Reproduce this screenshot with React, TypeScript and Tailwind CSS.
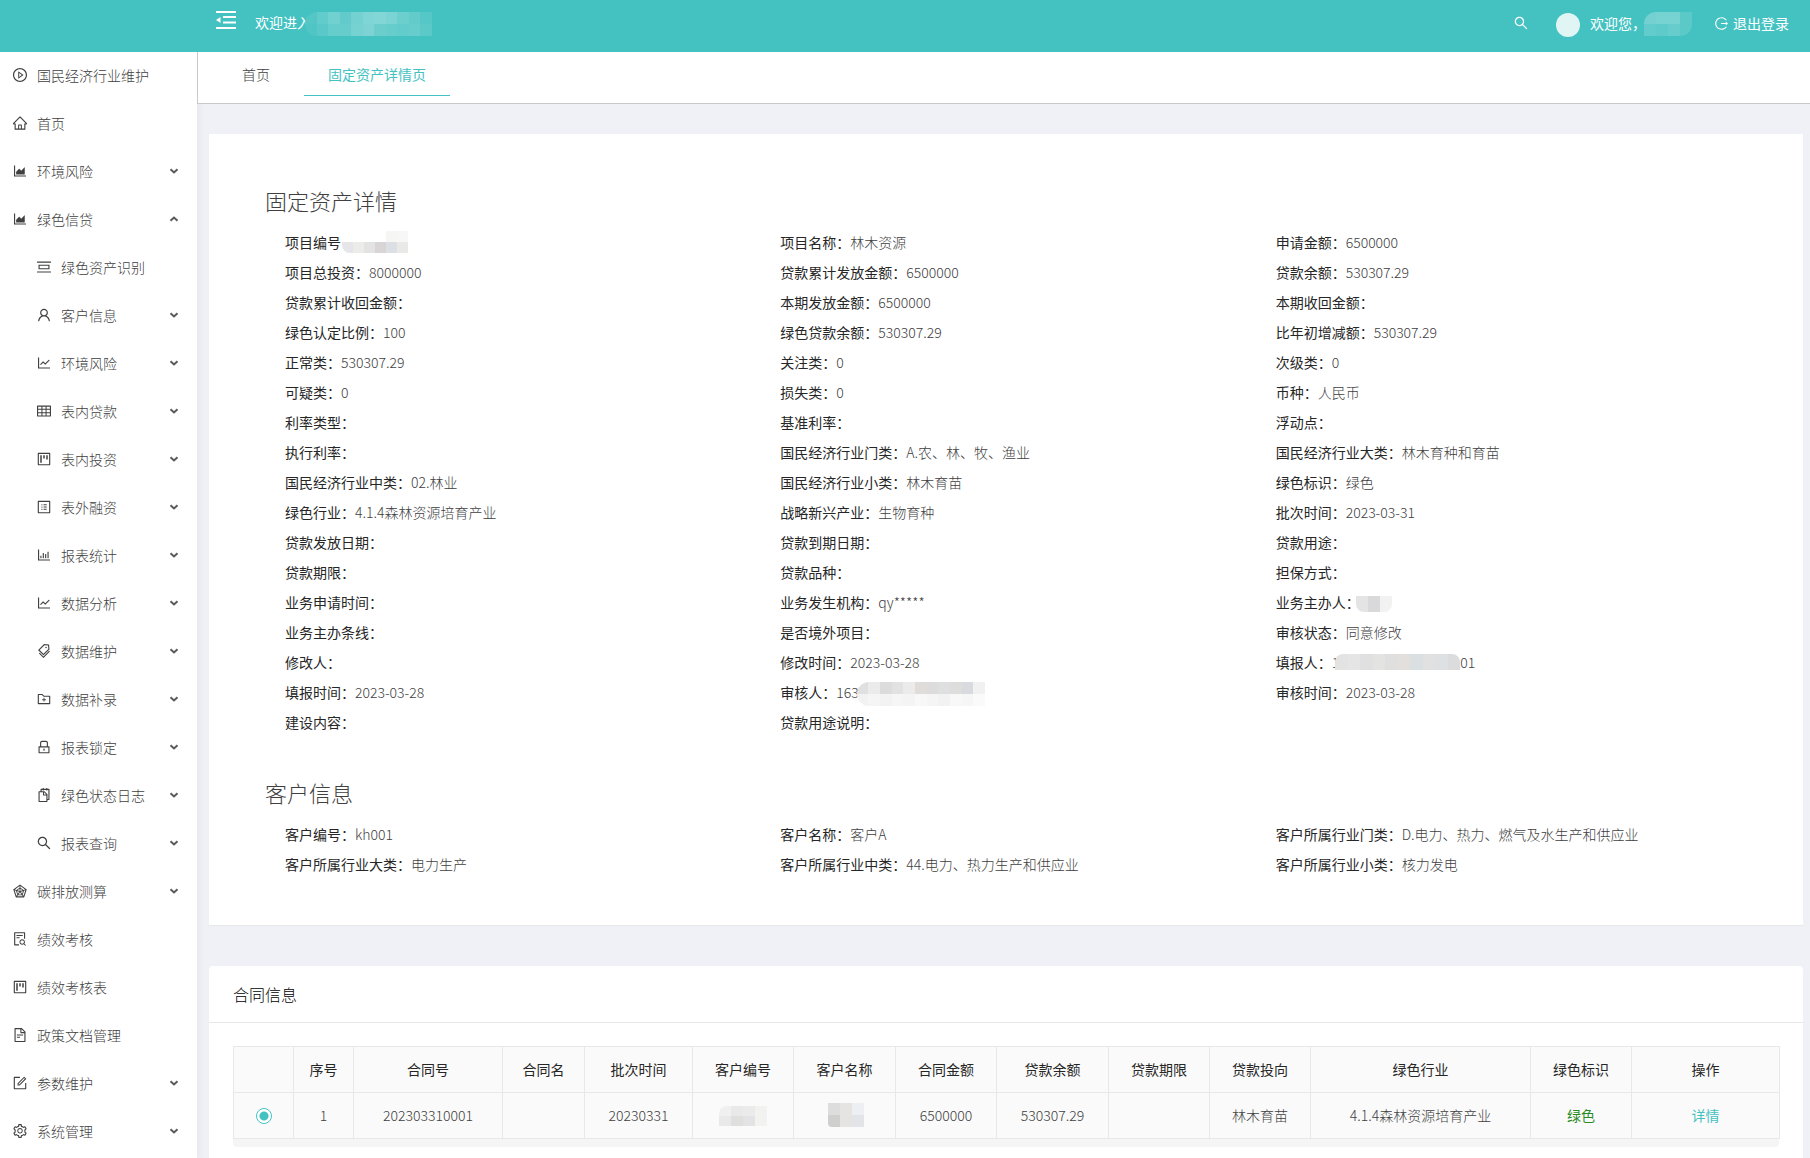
import type { ReactNode } from "react";
import type { IconType } from "react-icons";
import {
  AiOutlineAreaChart,
  AiOutlineBarChart,
  AiOutlineFileSearch,
  AiOutlineFileText,
  AiOutlineFolderAdd,
  AiOutlineForm,
  AiOutlineHome,
  AiOutlineLineChart,
  AiOutlineLock,
  AiOutlineLogout,
  AiOutlinePicCenter,
  AiOutlinePlayCircle,
  AiOutlineProfile,
  AiOutlineProject,
  AiOutlineRadarChart,
  AiOutlineSearch,
  AiOutlineSetting,
  AiOutlineSnippets,
  AiOutlineTable,
  AiOutlineTags,
  AiOutlineUser,
} from "react-icons/ai";

type MenuItem = { label: string; icon: IconType; sub?: boolean; arrow?: "down" | "up" };

const menu: MenuItem[] = [
  { label: "国民经济行业维护", icon: AiOutlinePlayCircle },
  { label: "首页", icon: AiOutlineHome },
  { label: "环境风险", icon: AiOutlineAreaChart, arrow: "down" },
  { label: "绿色信贷", icon: AiOutlineAreaChart, arrow: "up" },
  { label: "绿色资产识别", icon: AiOutlinePicCenter, sub: true },
  { label: "客户信息", icon: AiOutlineUser, sub: true, arrow: "down" },
  { label: "环境风险", icon: AiOutlineLineChart, sub: true, arrow: "down" },
  { label: "表内贷款", icon: AiOutlineTable, sub: true, arrow: "down" },
  { label: "表内投资", icon: AiOutlineProject, sub: true, arrow: "down" },
  { label: "表外融资", icon: AiOutlineProfile, sub: true, arrow: "down" },
  { label: "报表统计", icon: AiOutlineBarChart, sub: true, arrow: "down" },
  { label: "数据分析", icon: AiOutlineLineChart, sub: true, arrow: "down" },
  { label: "数据维护", icon: AiOutlineTags, sub: true, arrow: "down" },
  { label: "数据补录", icon: AiOutlineFolderAdd, sub: true, arrow: "down" },
  { label: "报表锁定", icon: AiOutlineLock, sub: true, arrow: "down" },
  { label: "绿色状态日志", icon: AiOutlineSnippets, sub: true, arrow: "down" },
  { label: "报表查询", icon: AiOutlineSearch, sub: true, arrow: "down" },
  { label: "碳排放测算", icon: AiOutlineRadarChart, arrow: "down" },
  { label: "绩效考核", icon: AiOutlineFileSearch },
  { label: "绩效考核表", icon: AiOutlineProject },
  { label: "政策文档管理", icon: AiOutlineFileText },
  { label: "参数维护", icon: AiOutlineForm, arrow: "down" },
  { label: "系统管理", icon: AiOutlineSetting, arrow: "down" },
];

/* Pixelated strip covering private values; each inner array is one row of tiles. */
function Mosaic({ rows, className }: { rows: string[][]; className: string }) {
  return (
    <span aria-hidden="true" className={`inline-flex shrink-0 flex-col overflow-hidden ${className}`}>
      {rows.map((row, r) => (
        <span key={r} className="flex flex-1">
          {row.map((color, c) => (
            <span key={c} className="flex-1" style={{ backgroundColor: color }} />
          ))}
        </span>
      ))}
    </span>
  );
}

type Field = { label: string; value?: ReactNode; noColon?: boolean };

const assetFields: Field[] = [
  {
    label: "项目编号",
    noColon: true,
    value: (
      <Mosaic
        className="-my-1 ml-px h-[22px] w-[66px] rounded-l-lg align-middle"
        rows={[
          ["#ffffff", "#ffffff", "#ffffff", "#ffffff", "#f6f6f5", "#f7f7f7"],
          ["#e6e5e9", "#ececeb", "#e3e3e4", "#d9d4d6", "#dce0e4", "#e9e9e8"],
        ]}
      />
    ),
  },
  { label: "项目名称", value: "林木资源" },
  { label: "申请金额", value: "6500000" },
  { label: "项目总投资", value: "8000000" },
  { label: "贷款累计发放金额", value: "6500000" },
  { label: "贷款余额", value: "530307.29" },
  { label: "贷款累计收回金额" },
  { label: "本期发放金额", value: "6500000" },
  { label: "本期收回金额" },
  { label: "绿色认定比例", value: "100" },
  { label: "绿色贷款余额", value: "530307.29" },
  { label: "比年初增减额", value: "530307.29" },
  { label: "正常类", value: "530307.29" },
  { label: "关注类", value: "0" },
  { label: "次级类", value: "0" },
  { label: "可疑类", value: "0" },
  { label: "损失类", value: "0" },
  { label: "币种", value: "人民币" },
  { label: "利率类型" },
  { label: "基准利率" },
  { label: "浮动点" },
  { label: "执行利率" },
  { label: "国民经济行业门类", value: "A.农、林、牧、渔业" },
  { label: "国民经济行业大类", value: "林木育种和育苗" },
  { label: "国民经济行业中类", value: "02.林业" },
  { label: "国民经济行业小类", value: "林木育苗" },
  { label: "绿色标识", value: "绿色" },
  { label: "绿色行业", value: "4.1.4森林资源培育产业" },
  { label: "战略新兴产业", value: "生物育种" },
  { label: "批次时间", value: "2023-03-31" },
  { label: "贷款发放日期" },
  { label: "贷款到期日期" },
  { label: "贷款用途" },
  { label: "贷款期限" },
  { label: "贷款品种" },
  { label: "担保方式" },
  { label: "业务申请时间" },
  { label: "业务发生机构", value: "qy*****" },
  {
    label: "业务主办人",
    value: (
      <Mosaic
        className="-ml-1 mt-1 h-4 w-9 rounded-b-lg align-middle"
        rows={[["#e4e4e5", "#d9d9dc", "#f2f2f3"]]}
      />
    ),
  },
  { label: "业务主办条线" },
  { label: "是否境外项目" },
  { label: "审核状态", value: "同意修改" },
  { label: "修改人" },
  { label: "修改时间", value: "2023-03-28" },
  {
    label: "填报人",
    value: (
      <>
        1
        <Mosaic
          className="-ml-1 h-4 w-[125px] rounded-t-lg align-middle"
          rows={[["#e3e3e3", "#e5e5e5", "#e0e0e0", "#e3e3e2", "#dfdfe0", "#e2dfdc", "#dadfe2", "#e0e1e0", "#dde1e3", "#dcdcdc"]]}
        />
        01
      </>
    ),
  },
  { label: "填报时间", value: "2023-03-28" },
  {
    label: "审核人",
    value: (
      <>
        163
        <Mosaic
          className="-ml-0.5 mt-1 h-6 w-32 rounded-l-xl align-middle"
          rows={[
            ["#e0e0e2", "#ebebeb", "#dcdcdd", "#e2e2e1", "#ebebeb", "#e0dcda", "#dcdcdd", "#dedfe0", "#dddddd", "#d9dadf", "#f1f1f1"],
            ["#f2f2f2", "#f5f5f5", "#f3f3f4", "#f6f6f6", "#f3f4f3", "#f8f8f8", "#f5f5f5", "#f2f2f2", "#f8f8f8", "#f6f6f6", "#fafafa"],
          ]}
        />
      </>
    ),
  },
  { label: "审核时间", value: "2023-03-28" },
  { label: "建设内容" },
  { label: "贷款用途说明" },
];

const customerFields: Field[] = [
  { label: "客户编号", value: "kh001" },
  { label: "客户名称", value: "客户A" },
  { label: "客户所属行业门类", value: "D.电力、热力、燃气及水生产和供应业" },
  { label: "客户所属行业大类", value: "电力生产" },
  { label: "客户所属行业中类", value: "44.电力、热力生产和供应业" },
  { label: "客户所属行业小类", value: "核力发电" },
];

function FieldList({ title, fields }: { title: string; fields: Field[] }) {
  return (
    <section>
      <h2 className="pl-14 text-[22px] leading-8">{title}</h2>
      <dl className="mt-[11px] grid grid-cols-3 pr-8 pl-[76px]">
        {fields.map((f) => (
          <div key={f.label} className="flex h-[30px] items-center whitespace-nowrap">
            <dt className="font-normal text-[#262626]">
              {f.label}
              {f.noColon ? "" : "："}
            </dt>
            <dd className="flex items-center">{f.value}</dd>
          </div>
        ))}
      </dl>
    </section>
  );
}

type Column = { title: string; width: number; cell: ReactNode };

const columns: Column[] = [
  {
    title: "",
    width: 60,
    cell: (
      <input
        type="radio"
        name="contract"
        aria-label="选择合同 202303310001"
        defaultChecked
        className="mx-auto mt-0.5 block size-4 appearance-none rounded-full border border-[#44c2c2] bg-white bg-[radial-gradient(circle,#44c2c2_0_4px,transparent_5px)]"
      />
    ),
  },
  { title: "序号", width: 60, cell: "1" },
  { title: "合同号", width: 149, cell: "202303310001" },
  { title: "合同名", width: 82, cell: "" },
  { title: "批次时间", width: 108, cell: "20230331" },
  {
    title: "客户编号",
    width: 101,
    cell: (
      <Mosaic
        className="h-5 w-12 rounded-tl-lg align-middle"
        rows={[
          ["#f0f0f0", "#e9e9e9", "#ebebeb", "#f2f2f0"],
          ["#e8e9e8", "#dfdfde", "#e3e3e5", "#f2f2f0"],
        ]}
      />
    ),
  },
  {
    title: "客户名称",
    width: 102,
    cell: (
      <Mosaic
        className="ml-0.5 h-6 w-9 rounded-bl-sm align-middle"
        rows={[
          ["#dddddd", "#e5e4e2", "#eeeff2"],
          ["#cfcfce", "#e5e4e2", "#e3e4e7"],
        ]}
      />
    ),
  },
  { title: "合同金额", width: 101, cell: "6500000" },
  { title: "贷款余额", width: 112, cell: "530307.29" },
  { title: "贷款期限", width: 101, cell: "" },
  { title: "贷款投向", width: 101, cell: "林木育苗" },
  { title: "绿色行业", width: 220, cell: "4.1.4森林资源培育产业" },
  { title: "绿色标识", width: 101, cell: <span className="font-normal text-[#2b8a1f]">绿色</span> },
  {
    title: "操作",
    width: 148,
    cell: (
      <a href="#detail" className="font-normal text-[#44c2c2]">
        详情
      </a>
    ),
  },
];

function Chevron({ up }: { up?: boolean }) {
  return (
    <svg
      viewBox="0 0 10 10"
      aria-hidden="true"
      className={`ml-auto size-2.5 fill-none stroke-[#595959] stroke-2 ${up ? "rotate-180" : ""}`}
    >
      <path d="M1.5 3.2 L5 6.4 L8.5 3.2" />
    </svg>
  );
}

function FoldIcon() {
  return (
    <svg viewBox="0 0 20 18" aria-hidden="true" className="h-[18px] w-5 fill-white">
      <path d="M0 0H20V2H0zM7 5H20V7H7zM7 10.5H20V12.5H7zM0 16H20V18H0zM0 9L4.5 6V12z" />
    </svg>
  );
}

function Header() {
  return (
    <header className="z-10 flex h-[52px] items-center bg-[#44c2c2] pr-[21px] pl-[216px] font-normal text-white">
      <button type="button" aria-label="收起菜单" className="mb-3">
        <FoldIcon />
      </button>
      <span className="mb-2 ml-[19px]">欢迎进入</span>
      <Mosaic
        className="-ml-1.5 mb-1 h-6 w-[127px] rounded-l-xl"
        rows={[
          ["#55c6c6", "#62cbcb", "#71d0d0", "#62caca", "#74d1d1", "#7fd5d5", "#83d6d6", "#7bd3d3", "#6dcece", "#64cbcb", "#55c7c7"],
          ["#50c5c5", "#5ac8c8", "#66cccc", "#66cccc", "#76d1d1", "#7dd3d3", "#6ccdcd", "#66cccc", "#62cbcb", "#66cccc", "#5cc9c9"],
        ]}
      />
      <div className="ml-auto flex items-center">
        <button type="button" aria-label="搜索" className="mb-1.5">
          <AiOutlineSearch className="size-4" />
        </button>
        <span className="mb-0.5 ml-[27px] size-6 rounded-full bg-[#e0f5f4]" />
        <span className="mb-1.5 ml-2.5">欢迎您，</span>
        <Mosaic
          className="-ml-0.5 mb-1 h-6 w-12 rounded-tl-xl rounded-br-xl"
          rows={[
            ["#75d1d1", "#77d2d2", "#77d2d2", "#5cc9c9"],
            ["#62cbcb", "#5ecaca", "#66cccc", "#5cc9c9"],
          ]}
        />
        <button type="button" className="mb-1.5 ml-[22px] flex items-center gap-1">
          <AiOutlineLogout className="size-[15px]" />
          退出登录
        </button>
      </div>
    </header>
  );
}

function Sidebar() {
  return (
    <nav className="w-[197px] shrink-0 bg-white shadow-[2px_0_8px_rgba(29,35,41,0.05)]">
      <ul>
        {menu.map(({ label, icon: Icon, sub, arrow }, i) => (
          <li key={i}>
            <button
              type="button"
              className={`flex h-12 w-full items-center pr-[18px] pb-0.5 ${sub ? "pl-9" : "pl-3"}`}
            >
              <Icon className="mr-[9px] size-4 shrink-0" />
              <span className="whitespace-nowrap">{label}</span>
              {arrow && <Chevron up={arrow === "up"} />}
            </button>
          </li>
        ))}
      </ul>
    </nav>
  );
}

export default function App() {
  return (
    <div className="flex min-h-screen flex-col overflow-hidden bg-[#f0f1f6] font-['Noto_Sans_CJK_SC',sans-serif] text-sm font-light text-[#404040]">
      <Header />
      <div className="flex grow">
        <Sidebar />
        <main className="flex min-w-0 grow flex-col">
          <div className="flex h-[52px] items-start gap-2.5 border-b border-l border-[#c9c9c9] bg-white pl-5">
            <button type="button" className="h-11 px-6">
              首页
            </button>
            <button type="button" className="h-11 border-b border-[#44c2c2] px-6 font-normal text-[#44c2c2]">
              固定资产详情页
            </button>
          </div>
          <div className="mt-[30px] mr-[7px] ml-3 flex flex-col gap-[39px] border-b border-[#e8e8e8] bg-white pt-[50px] pb-[46px]">
            <FieldList title="固定资产详情" fields={assetFields} />
            <FieldList title="客户信息" fields={customerFields} />
          </div>
          <div className="mt-10 mr-[7px] ml-3 flex grow flex-col rounded-t-sm bg-white">
            <h2 className="border-b border-[#e8e8e8] px-6 py-4 text-base text-black">合同信息</h2>
            <div className="px-6 pt-[23px] pb-2">
              <div className="rounded-b-sm bg-[#f5f5f5] pb-2">
                <table className="w-full table-fixed border-collapse bg-[#fafafa] text-center">
                  <colgroup>
                    {columns.map((c, i) => (
                      <col key={i} style={{ width: c.width }} />
                    ))}
                  </colgroup>
                  <thead>
                    <tr className="h-[46px] text-[#262626]">
                      {columns.map((c, i) => (
                        <th key={i} scope="col" className="border border-[#e8e8e8] p-0 pb-0.5 font-normal">
                          {c.title}
                        </th>
                      ))}
                    </tr>
                  </thead>
                  <tbody>
                    <tr className="h-[46px]">
                      {columns.map((c, i) => (
                        <td key={i} className="border border-[#e8e8e8] p-0 pb-0.5">
                          {c.cell}
                        </td>
                      ))}
                    </tr>
                  </tbody>
                </table>
              </div>
            </div>
          </div>
        </main>
      </div>
    </div>
  );
}
